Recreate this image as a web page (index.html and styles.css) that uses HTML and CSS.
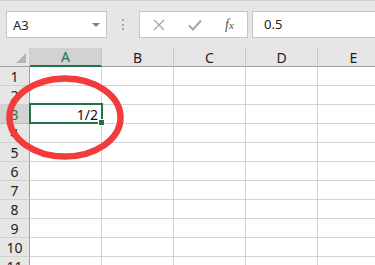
FILE: index.html
```html
<!DOCTYPE html>
<html>
<head>
<meta charset="utf-8">
<link rel="stylesheet" href="styles.css">
</head>
<body>
<div class="app">
  <div class="fbar">
    <div class="namebox">
      <span class="nb-text">A3</span>
      <span class="nb-arrow"></span>
    </div>
    <div class="dots"><i></i><i></i><i></i></div>
    <div class="btns">
      <svg class="ic" width="12" height="12" viewBox="0 0 12 12"><path d="M1 1L11 11M11 1L1 11" stroke="#a6a6a6" stroke-width="1.3" fill="none"/></svg>
      <svg class="ic" width="14" height="12" viewBox="0 0 14 12"><path d="M1 6.5L5 10.5L13 1.5" stroke="#a6a6a6" stroke-width="2" fill="none"/></svg>
      <span class="fx">f<span class="fx-x">x</span></span>
    </div>
    <div class="finput">0.5</div>
  </div>
  <div class="sheet">
    <div class="row hdr">
      <div class="rh corner"><span class="tri"></span></div>
      <div class="ch sel">A</div>
      <div class="ch">B</div>
      <div class="ch">C</div>
      <div class="ch">D</div>
      <div class="ch">E</div>
    </div>
    <div class="row"><div class="rh">1</div><div class="c"></div><div class="c"></div><div class="c"></div><div class="c"></div><div class="c"></div></div>
    <div class="row"><div class="rh">2</div><div class="c"></div><div class="c"></div><div class="c"></div><div class="c"></div><div class="c"></div></div>
    <div class="row"><div class="rh sel">3</div><div class="c active">1/2<span class="selbox"><span class="handle"></span></span></div><div class="c"></div><div class="c"></div><div class="c"></div><div class="c"></div></div>
    <div class="row"><div class="rh">4</div><div class="c"></div><div class="c"></div><div class="c"></div><div class="c"></div><div class="c"></div></div>
    <div class="row"><div class="rh">5</div><div class="c"></div><div class="c"></div><div class="c"></div><div class="c"></div><div class="c"></div></div>
    <div class="row"><div class="rh">6</div><div class="c"></div><div class="c"></div><div class="c"></div><div class="c"></div><div class="c"></div></div>
    <div class="row"><div class="rh">7</div><div class="c"></div><div class="c"></div><div class="c"></div><div class="c"></div><div class="c"></div></div>
    <div class="row"><div class="rh">8</div><div class="c"></div><div class="c"></div><div class="c"></div><div class="c"></div><div class="c"></div></div>
    <div class="row"><div class="rh">9</div><div class="c"></div><div class="c"></div><div class="c"></div><div class="c"></div><div class="c"></div></div>
    <div class="row"><div class="rh">10</div><div class="c"></div><div class="c"></div><div class="c"></div><div class="c"></div><div class="c"></div></div>
    <div class="row"><div class="rh">11</div><div class="c"></div><div class="c"></div><div class="c"></div><div class="c"></div><div class="c"></div></div>
  </div>
  <svg class="circle" width="375" height="265" viewBox="0 0 375 265">
    <ellipse cx="65" cy="117.5" rx="55.5" ry="39" fill="none" stroke="#f23b3b" stroke-width="6.5"/>
  </svg>
</div>
</body>
</html>
```

FILE: styles.css
```css
html, body {
  margin: 0;
  padding: 0;
  background: #ffffff;
}
.app {
  position: relative;
  width: 375px;
  height: 265px;
  overflow: hidden;
  font-family: "Noto Sans", "Liberation Sans", sans-serif;
}
.fbar {
  height: 48px;
  box-sizing: border-box;
  background: #e6e6e6;
  border-top: 1px solid #d0d0d0;
  padding-top: 10px;
  padding-left: 6px;
  display: flex;
  align-items: flex-start;
  white-space: nowrap;
}
.namebox {
  width: 101px;
  height: 27px;
  box-sizing: border-box;
  background: #fff;
  border: 1px solid #c6c6c6;
  display: flex;
  align-items: center;
  padding-left: 6px;
  padding-right: 6px;
}
.nb-text {
  flex: 1;
  font-size: 13px;
  color: #222;
}
.nb-arrow {
  width: 0;
  height: 0;
  border-left: 4px solid transparent;
  border-right: 4px solid transparent;
  border-top: 4px solid #808080;
}
.dots {
  width: 32px;
  height: 27px;
  display: flex;
  flex-direction: column;
  align-items: center;
  justify-content: center;
  gap: 2.5px;
}
.dots i {
  display: block;
  width: 2px;
  height: 2px;
  background: #a8a8a8;
}
.btns {
  width: 109px;
  height: 27px;
  box-sizing: border-box;
  background: #fff;
  border: 1px solid #c6c6c6;
  display: flex;
  align-items: center;
  padding-left: 13px;
  gap: 23px;
}
.fx {
  font-family: "Liberation Serif", serif;
  font-style: italic;
  font-size: 14px;
  color: #555;
  margin-left: 0px;
}
.fx-x {
  font-size: 11px;
}
.finput {
  margin-left: 4px;
  flex: 1;
  height: 27px;
  box-sizing: border-box;
  background: #fff;
  border: 1px solid #c6c6c6;
  border-right: none;
  padding-left: 11px;
  font-size: 13px;
  line-height: 25px;
  color: #222;
}
.sheet {
  display: flex;
  flex-direction: column;
}
.row {
  display: flex;
  height: 19px;
}
.rh {
  width: 30px;
  flex: none;
  box-sizing: border-box;
  background: #e6e6e6;
  border-right: 1px solid #9e9e9e;
  border-bottom: 1px solid #d0d0d0;
  font-size: 14px;
  line-height: 19px;
  text-align: center;
  color: #222;
}
.rh.sel {
  background: #d2d2d2;
  color: #217346;
  border-bottom-color: #bdbdbd;
}
.corner {
  position: relative;
  border-bottom: 1px solid #9e9e9e;
  border-right: 1px solid #d0d0d0;
}
.tri {
  position: absolute;
  right: 3px;
  bottom: 3px;
  width: 0;
  height: 0;
  border-left: 10px solid transparent;
  border-bottom: 10px solid #b4b4b4;
}
.hdr {
  height: 19px;
}
.ch {
  width: 72px;
  flex: none;
  box-sizing: border-box;
  background: #e6e6e6;
  border-right: 1px solid #c6c6c6;
  border-bottom: 1px solid #9e9e9e;
  font-size: 14px;
  line-height: 19px;
  text-align: center;
  color: #222;
}
.ch.sel {
  background: #d2d2d2;
  color: #217346;
  border-bottom: 2px solid #217346;
  line-height: 18px;
}
.c {
  width: 72px;
  flex: none;
  box-sizing: border-box;
  border-right: 1px solid #d4d4d4;
  border-bottom: 1px solid #d4d4d4;
}
.c.active {
  position: relative;
  text-align: right;
  font-size: 14px;
  line-height: 19px;
  padding-right: 3px;
  color: #111;
}
.selbox {
  position: absolute;
  top: -2px;
  left: -1px;
  right: -2px;
  bottom: -1px;
  border: 2px solid #217346;
}
.handle {
  position: absolute;
  right: -4px;
  bottom: -4px;
  width: 5px;
  height: 5px;
  background: #217346;
  border: 1px solid #fff;
}
.circle {
  position: absolute;
  left: 0;
  top: 0;
  pointer-events: none;
}
```
